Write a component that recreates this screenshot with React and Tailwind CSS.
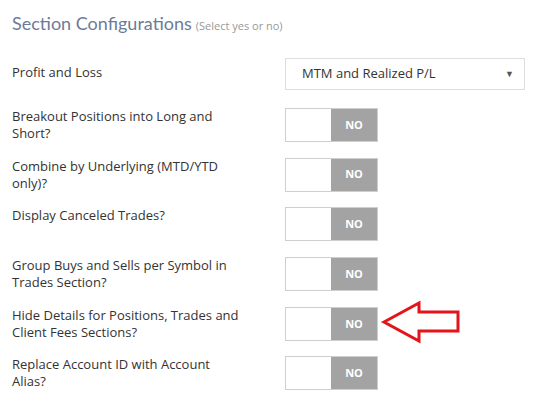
import React from 'react'

const rows = [
  'Breakout Positions into Long and Short?',
  'Combine by Underlying (MTD/YTD only)?',
  'Display Canceled Trades?',
  'Group Buys and Sells per Symbol in Trades Section?',
  'Hide Details for Positions, Trades and Client Fees Sections?',
  'Replace Account ID with Account Alias?',
]

function Toggle() {
  return (
    <div className="flex h-[34px] w-[93px] border border-[#cfcfcf] bg-white">
      <div className="flex-1" />
      <div className="flex w-[46px] items-center justify-center bg-[#a3a3a3] text-[11px] font-bold text-white">
        NO
      </div>
    </div>
  )
}

function Arrow() {
  return (
    <svg className="absolute left-[380px] top-[299px]" width="82" height="46" viewBox="0 0 82 46">
      <path
        d="M4 23 L39 4 L39 13 L78 13 L78 32 L39 32 L39 42 Z"
        fill="white"
        stroke="#e3151b"
        strokeWidth="3"
        strokeLinejoin="miter"
      />
    </svg>
  )
}

export default function App() {
  return (
    <div className="relative h-[410px] w-[543px] bg-white font-['Open_Sans',sans-serif] text-[#333]">
      {/* Header */}
      <div className="px-3 pt-[9px] leading-[28px]">
        <span className="font-['Lato',sans-serif] text-[18px] text-[#6d7b99]">Section Configurations</span>
        <span className="ml-1 text-[11px] text-[#999]">(Select yes or no)</span>
      </div>

      {/* Profit and Loss */}
      <div className="mt-[18px] flex">
        <div className="w-[285px] pl-3 pt-[5px] text-[13px]">Profit and Loss</div>
        <div className="flex h-[32px] w-[240px] items-center justify-between border border-[#ddd] pl-[16px] pr-[10px] text-[13px]">
          <span>MTM and Realized P/L</span>
          <span className="text-[9px] text-[#555]">▼</span>
        </div>
      </div>

      {/* Yes/No rows */}
      <div className="mt-[18px] flex flex-col gap-[15.7px]">
        {rows.map((label) => (
          <div key={label} className="flex">
            <div className="w-[285px] pl-3 pr-[42px] text-[13px] leading-[17px]">{label}</div>
            <Toggle />
          </div>
        ))}
      </div>

      <Arrow />
    </div>
  )
}
